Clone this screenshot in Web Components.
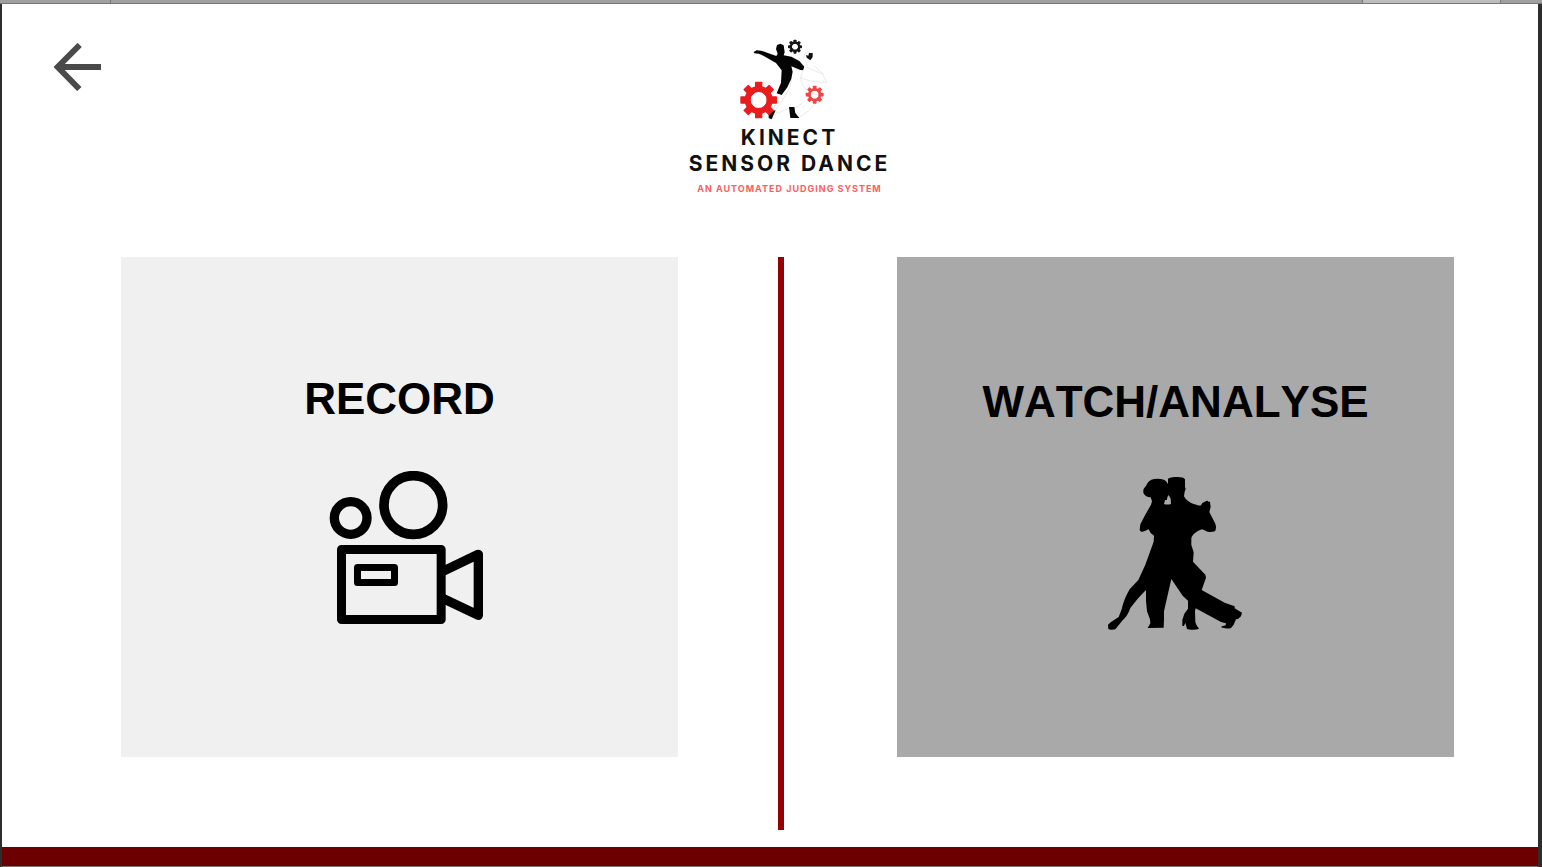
<!DOCTYPE html>
<html lang="en">
<head>
<meta charset="utf-8">
<meta name="viewport" content="width=device-width, initial-scale=1">
<title>Kinect Sensor Dance</title>
<style>
html, body { margin: 0; background: #fff; }
body { font-family: "Liberation Sans", Arial, sans-serif; color: #000; }
</style>
</head>
<body>
<dance-app>
  <app-header slot="header"></app-header>
  <mode-card label="RECORD" icon="camera"></mode-card>
  <mode-divider></mode-divider>
  <mode-card label="WATCH/ANALYSE" icon="dancers"></mode-card>
</dance-app>
<script>
function define(name, html, setup) {
  const template = document.createElement('template');
  template.innerHTML = html;
  customElements.define(name, class extends HTMLElement {
    constructor() {
      super();
      this.attachShadow({ mode: 'open' }).append(template.content.cloneNode(true));
    }
    connectedCallback() { if (setup) setup(this); }
  });
}

const gear = (cx, cy, r, hole, tooth, reach, fill) => {
  let teeth = '';
  for (let a = 0; a < 360; a += 45) {
    teeth += `<rect x="${cx - tooth / 2}" y="${cy - reach}" width="${tooth}" height="${reach - hole}" rx="2" transform="rotate(${a} ${cx} ${cy})"/>`;
  }
  const ring = (r + hole) / 2;
  return `<g fill="${fill}">${teeth}<circle cx="${cx}" cy="${cy}" r="${ring}" fill="none" stroke="${fill}" stroke-width="${r - hole}"/></g>`;
};

const icons = {
  camera: `<svg viewBox="-18 33 513 468" aria-hidden="true">
    <g fill="none" stroke="#000" stroke-linejoin="round">
      <circle cx="280" cy="135" r="88" stroke-width="29"/>
      <circle cx="92" cy="174" r="49" stroke-width="28"/>
      <rect x="64.500" y="268.500" width="299" height="210" stroke-width="27"/>
      <rect x="112.500" y="322.500" width="111" height="45" stroke-width="21"/>
      <path d="M366 335L475 283V466L366 414" stroke-width="28"/>
    </g></svg>`,
  dancers: `<svg viewBox="-15 27 513 468" aria-hidden="true">
    <path d="M145 74C147 68 154 64 157 55C163 45 173 41 187 41C201 41 210 44 215 51L219 58V41C226 36 238 36 248 36C260 36 267 38 270 43L270 65L272 72L269 80L267 94C273 106 284 113 296 117C306 120 313 123 318 121L322 114L334 108L338 107L340 110H345L347 126L343 141L349 153L360 174C364 183 364 193 360 199C350 202 339 202 333 198L321 193C306 198 292 208 289 220L289 240L296 262L294 290L331 329L333 338L320 375L389 413L419 424V430L441 443L438 454L429 462L423 463L416 479L408 489C398 492 384 490 379 487L380 484L392 481L393 475L378 471L302 430L300 439L301 470C302 480 310 487 312 491C303 495 283 495 276 492L271 473L267 483H262V465L268 446L279 431V407L263 392L229 342L207 439V461L206 488L158 489L166 475L165 463L156 439L153 408V375C137 390 122 408 106 429C101 445 92 458 83 466L61 493C54 495 44 495 40 492L39 479L47 472L71 456L80 433C84 413 93 391 104 373L130 345L151 299L176 230L177 212L167 204L161 193L149 198C142 202 136 201 134 194L136 178L150 151L168 119L171 109L167 97C159 97 148 92 145 83ZM221 90L217 97L216 104L210 106L207 117C213 120 223 119 228 116L227 101Z" fill="#000" fill-rule="evenodd"/>
  </svg>`
};

define('back-button', `
<style>
:host { display: block; }
button { display: block; padding: 0; border: 0; background: none; cursor: pointer; }
svg { display: block; width: 48px; height: 48px; }
</style>
<button type="button" aria-label="Back">
  <svg viewBox="42 39 144 144" aria-hidden="true"><path d="M119 45L53 111L118 177M60 111H183" fill="none" stroke="#4a4a4a" stroke-width="18"/></svg>
</button>`);

define('brand-logo', `
<style>
:host { display: flex; flex-direction: column; align-items: center; font-family: Inter, sans-serif; text-align: center; white-space: nowrap; }
svg { display: block; width: 111px; height: 84px; margin-bottom: 4px; }
h1 { margin: 0; font-size: 21px; line-height: 26px; font-weight: 700; letter-spacing: 3px; color: #111; }
h1 span { display: block; }
p { margin: 0; font-size: 9px; line-height: 24px; font-weight: 700; letter-spacing: 1px; color: #f9605f; }
</style>
<svg viewBox="12 21 333 252" aria-hidden="true">
  <g fill="none" stroke="#dedede" stroke-width="2">
    <path d="M222 82C221 66 238 61 243 73C249 86 238 94 230 97L231 112L277 132L291 157C270 157 244 157 210 142M184 142C186 179 156 211 120 263M222 121C207 139 211 161 226 176L269 199C256 226 235 246 210 260M143 250C166 239 184 229 197 235L217 219M253 107L280 133M147 199L117 268L131 264L143 243"/>
  </g>
  <path d="M71 66L80 61L93 62L99 64L139 78L143 71L138 57L141 45L151 41L161 46L164 67L161 76L184 80L208 93L223 110L219 121L211 120L184 109L188 125L184 146L172 172L155 195L140 190L153 158L155 121L138 99L94 74L86 71L73 70Z" fill="#050505"/>
  <path d="M228 75L235 77L237 69L248 69V81L241 91L230 83Z" fill="#111"/>
  <path d="M177 231H193L196 249L208 264H181ZM116 246L137 241L125 268L116 264Z" fill="#080808"/>
  ${gear(195, 50, 16, 9, 9, 21, '#151515')}
  ${gear(86, 210, 42, 24, 22, 55, '#e91c1e')}
  ${gear(254, 194, 20, 12, 11, 27, '#ee4644')}
</svg>
<h1><span>KINECT</span><span>SENSOR DANCE</span></h1>
<p>AN AUTOMATED JUDGING SYSTEM</p>`);

define('app-header', `
<style>
:host { display: block; }
header { display: grid; grid-template-columns: 1fr auto 1fr; align-items: start; box-sizing: border-box; min-height: 253px; padding: 33px 13px 24px 52px; }
back-button { margin-top: 6px; }
</style>
<header><back-button></back-button><brand-logo></brand-logo></header>`);

define('mode-card', `
<style>
:host { display: block; --surface: #f0f0f0; --lift: 12px; }
:host([icon="dancers"]) { --surface: #a9a9a9; --lift: 6px; }
button { display: flex; flex-direction: column; align-items: center; justify-content: center; gap: 48px; box-sizing: border-box; width: 100%; min-height: 500px; margin: 0; padding: 0 0 var(--lift); border: 0; border-radius: 0; background: var(--surface); color: #000; font-family: inherit; font-size: 44px; line-height: 48px; font-weight: 700; font-kerning: none; cursor: pointer; }
svg { display: block; width: 171px; height: 156px; }
</style>
<button type="button"><span class="label"></span><span class="icon"></span></button>`, host => {
  host.shadowRoot.querySelector('.label').textContent = host.getAttribute('label');
  host.shadowRoot.querySelector('.icon').innerHTML = icons[host.getAttribute('icon')];
});

define('mode-divider', `
<style>:host { display: block; width: 6px; min-height: 573px; margin-left: 100px; background: #930006; }</style>`);

define('dance-app', `
<style>
:host { display: flex; flex-direction: column; box-sizing: border-box; min-height: 100vh; border: solid #2e2e2e; border-width: 0 4px 0 2px; }
.tabs { display: flex; justify-content: flex-end; height: 3px; margin: 0 -4px 0 -2px; border-bottom: 1px solid #777; background: #a0a0a0; }
.tabs i { box-sizing: border-box; border: solid #777; border-width: 0 1px; }
.tabs .first { width: 111px; margin-right: auto; border-left: 0; }
.tabs .active { width: 139px; margin-right: 41px; background: #bebebe; }
main { flex: 1; display: grid; grid-template-columns: minmax(0, 1fr) 219px minmax(0, 1fr); align-items: start; padding: 0 84px 17px 119px; }
footer { height: 19px; background: #6c0000; border-bottom: 1px solid #777; }
</style>
<div class="tabs"><i class="first"></i><i class="active"></i></div>
<slot name="header"></slot>
<main><slot></slot></main>
<footer></footer>`);
</script>
</body>
</html>
